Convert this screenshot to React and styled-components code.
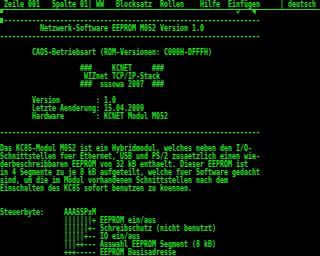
import React from "react";
import styled, { createGlobalStyle } from "styled-components";

const GREEN = "#1ee61e";
const FONT_SIZE = 8.5;
const ADVANCE = FONT_SIZE * 0.60205;
const COLS = 80;
const SCALE = 320 / (COLS * ADVANCE);

const GlobalStyle = createGlobalStyle`
  html, body {
    margin: 0;
    padding: 0;
    background: #000;
  }
  body {
    width: 320px;
    height: 256px;
    overflow: hidden;
  }
`;

const Screen = styled.div`
  position: relative;
  width: 320px;
  height: 256px;
  background: #000;
  color: ${GREEN};
  overflow: hidden;
`;

const TextLayer = styled.div`
  width: ${COLS * ADVANCE}px;
  transform: scaleX(${SCALE});
  transform-origin: 0 0;
  font-family: "DejaVu Sans Mono", "Liberation Mono", monospace;
  font-weight: bold;
  font-size: ${FONT_SIZE}px;
  display: flex;
  flex-direction: column;
`;

const Row = styled.div`
  height: 8px;
  box-sizing: border-box;
  padding-top: 1px;
  line-height: 7px;
  white-space: pre;
`;

const Ruler = styled.div`
  height: 8px;
  padding-top: 1px;
  box-sizing: border-box;
  display: flex;
  flex-direction: column;
`;

const RuleLine = styled.div`
  height: 1px;
  width: 100%;
  background: ${GREEN};
`;

const Cursor = styled.div`
  position: absolute;
  left: 0;
  top: 18px;
  width: 3px;
  height: 5px;
  background: ${GREEN};
`;

const Marker = styled.svg`
  position: absolute;
  left: ${(p) => p.$x}px;
  top: ${(p) => p.$y}px;
  width: ${(p) => p.$w}px;
  height: ${(p) => p.$h}px;
  fill: ${GREEN};
  overflow: visible;
`;

const pad = (n) => " ".repeat(n);
const DASHES = "-".repeat(65);

const header =
  " Zeile 001   Spalte 01| WW   Blocksatz  Rollen    Hilfe  Einfügen     | deutsch";

const body = [
  DASHES,
  pad(10) + "Netzwerk-Software EEPROM M052 Version 1.0",
  DASHES,
  "",
  pad(8) + "CAOS-Betriebsart (ROM-Versionen: C000H-DFFFH)",
  "",
  pad(20) + "###     KCNET     ###",
  pad(21) + "WIZnet TCP/IP-Stack",
  pad(20) + "###  susowa 2007  ###",
  "",
  pad(8) + "Version" + pad(9) + ": 1.0",
  pad(8) + "Letzte Aenderung" + ": 15.04.2009",
  pad(8) + "Hardware" + pad(8) + ": KCNET Modul M052",
  "",
  DASHES,
  "",
  "Das KC85-Modul M052 ist ein Hybridmodul, welches neben den I/O-",
  "Schnittstellen fuer Ethernet, USB und PS/2 zusaetzlich einen wie-",
  "derbeschreibbaren EEPROM von 32 kB enthaelt. Dieser EEPROM ist",
  "in 4 Segmente zu je 8 kB aufgeteilt, welche fuer Software gedacht",
  "sind, um die im Modul vorhandenen Schnittstellen nach dem",
  "Einschalten des KC85 sofort benutzen zu koennen.",
  "",
  "",
  "Steuerbyte:" + pad(5) + "AAASSPxM",
  pad(16) + "|||||||+ EEPROM ein/aus",
  pad(16) + "||||||+- Schreibschutz (nicht benutzt)",
  pad(16) + "|||||+-- IO ein/aus",
  pad(16) + "|||++--- Auswahl EEPROM Segment (8 kB)",
  pad(16) + "+++----- EEPROM Basisadresse",
];

export default function App() {
  return (
    <>
      <GlobalStyle />
      <Screen>
        <TextLayer>
          <Row>{header}</Row>
          <Ruler>
            <RuleLine />
          </Ruler>
          {body.map((line, i) => (
            <Row key={i}>{line}</Row>
          ))}
        </TextLayer>
        <Marker $x={0} $y={9} $w={3} $h={4} viewBox="0 0 3 4">
          <polygon points="0,1.5 1.5,0 3,0 3,4 0,4" />
        </Marker>
        <Marker $x={236} $y={10} $w={4} $h={4} viewBox="0 0 4 4">
          <polygon points="0,1 1.2,1 2,2.2 3,0 4,0 2.4,3.6 1.6,3.6" />
        </Marker>
        <Marker $x={252} $y={10} $w={4} $h={4} viewBox="0 0 4 4">
          <polygon points="0,0 4,0 3.4,4 2.6,4" />
        </Marker>
        <Cursor />
      </Screen>
    </>
  );
}
